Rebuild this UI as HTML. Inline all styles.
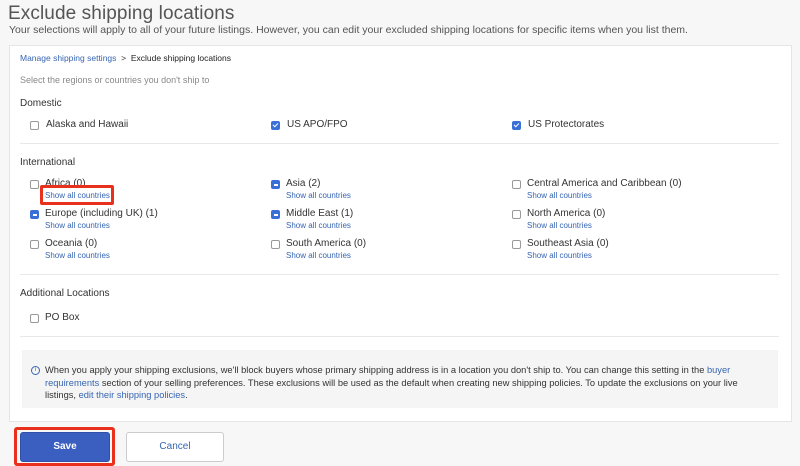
<!DOCTYPE html>
<html><head><style>
body{margin:0;width:800px;height:466px;background:#f7f7f7;font-family:"Liberation Sans",sans-serif;color:#333;position:relative;overflow:hidden}
.a{position:absolute;white-space:nowrap}
.panel{position:absolute;left:9px;top:45px;width:781px;height:375px;background:#fff;border:1px solid #e5e5e5}
.cb{position:absolute;width:7px;height:7px;border:1px solid #999;border-radius:2px;background:#fff}
.cb.on{background:#3a6fd8;border-color:#3a6fd8}
.cb.on::after{content:"";position:absolute;left:2px;top:0px;width:2px;height:4px;border:solid #fff;border-width:0 1.5px 1.5px 0;transform:rotate(45deg)}
.cb.ind{background:#3a6fd8;border-color:#3a6fd8}
.cb.ind::after{content:"";position:absolute;left:1.5px;top:3px;width:4px;height:1.5px;background:#fff}
.l{font-size:10px;color:#333}
.s{font-size:8px;color:#3665b3}
.hr{position:absolute;left:20px;width:759px;height:1px;background:#e8e8e8}
.h{font-size:10px;color:#333}
a{color:#3665b3;text-decoration:none}
</style></head><body>
<div class="a" style="left:8px;top:3px;font-size:19px;color:#555;font-weight:300;letter-spacing:0.1px">Exclude shipping locations</div>
<div class="a" style="left:9px;top:24px;font-size:10.5px;color:#555">Your selections will apply to all of your future listings. However, you can edit your excluded shipping locations for specific items when you list them.</div>
<div class="panel"></div>
<div class="a" style="left:20px;top:53px;font-size:8.5px"><span style="color:#3665b3">Manage shipping settings</span>&nbsp; &gt; &nbsp;<span style="color:#222">Exclude shipping locations</span></div>
<div class="a" style="left:20px;top:75px;font-size:9px;color:#888">Select the regions or countries you don't ship to</div>
<div class="a h" style="left:20px;top:98px">Domestic</div>
<div class="cb" style="left:30px;top:121px"></div><div class="a l" style="left:46px;top:119px">Alaska and Hawaii</div>
<div class="cb on" style="left:271px;top:121px"></div><div class="a l" style="left:287px;top:119px">US APO/FPO</div>
<div class="cb on" style="left:512px;top:121px"></div><div class="a l" style="left:528px;top:119px">US Protectorates</div>
<div class="hr" style="top:143px"></div>
<div class="a h" style="left:20px;top:157px">International</div>

<div class="cb" style="left:30px;top:180px"></div><div class="a l" style="left:45px;top:178px">Africa (0)</div><div class="a s" style="left:45px;top:191px">Show all countries</div>
<div class="cb ind" style="left:271px;top:180px"></div><div class="a l" style="left:286px;top:178px">Asia (2)</div><div class="a s" style="left:286px;top:191px">Show all countries</div>
<div class="cb" style="left:512px;top:180px"></div><div class="a l" style="left:527px;top:178px">Central America and Caribbean (0)</div><div class="a s" style="left:527px;top:191px">Show all countries</div>

<div class="cb ind" style="left:30px;top:210px"></div><div class="a l" style="left:45px;top:208px">Europe (including UK) (1)</div><div class="a s" style="left:45px;top:221px">Show all countries</div>
<div class="cb ind" style="left:271px;top:210px"></div><div class="a l" style="left:286px;top:208px">Middle East (1)</div><div class="a s" style="left:286px;top:221px">Show all countries</div>
<div class="cb" style="left:512px;top:210px"></div><div class="a l" style="left:527px;top:208px">North America (0)</div><div class="a s" style="left:527px;top:221px">Show all countries</div>

<div class="cb" style="left:30px;top:240px"></div><div class="a l" style="left:45px;top:238px">Oceania (0)</div><div class="a s" style="left:45px;top:251px">Show all countries</div>
<div class="cb" style="left:271px;top:240px"></div><div class="a l" style="left:286px;top:238px">South America (0)</div><div class="a s" style="left:286px;top:251px">Show all countries</div>
<div class="cb" style="left:512px;top:240px"></div><div class="a l" style="left:527px;top:238px">Southeast Asia (0)</div><div class="a s" style="left:527px;top:251px">Show all countries</div>

<div style="position:absolute;left:40px;top:185px;width:68px;height:14px;border:3px solid #e8301c;border-radius:2px"></div>

<div class="hr" style="top:274px"></div>
<div class="a h" style="left:20px;top:288px">Additional Locations</div>
<div class="cb" style="left:30px;top:314px"></div><div class="a l" style="left:45px;top:312px">PO Box</div>
<div class="hr" style="top:336px"></div>

<div style="position:absolute;left:22px;top:350px;width:756px;height:58px;background:#f5f5f5"></div>
<div class="a" style="left:31px;top:366px;width:7px;height:7px;border:1px solid #3665b3;border-radius:50%;font-size:6px;line-height:7px;text-align:center;color:#3665b3">i</div>
<div style="position:absolute;left:45px;top:364px;width:722px;font-size:9.3px;line-height:12.5px;color:#333">When you apply your shipping exclusions, we'll block buyers whose primary shipping address is in a location you don't ship to. You can change this setting in the <a>buyer requirements</a> section of your selling preferences. These exclusions will be used as the default when creating new shipping policies. To update the exclusions on your live listings, <a>edit their shipping policies</a>.</div>

<div style="position:absolute;left:14px;top:427px;width:95px;height:33px;border:3px solid #e8301c;border-radius:3px"></div>
<div style="position:absolute;left:20px;top:432px;width:88px;height:28px;background:#3b5fc0;border:1px solid #2f4fa8;border-radius:3px;color:#fff;font-size:10px;font-weight:bold;text-align:center;line-height:28px">Save</div>
<div style="position:absolute;left:126px;top:432px;width:96px;height:28px;background:#fff;border:1px solid #ccc;border-radius:3px;color:#3665b3;font-size:10px;text-align:center;line-height:28px">Cancel</div>
</body></html>
